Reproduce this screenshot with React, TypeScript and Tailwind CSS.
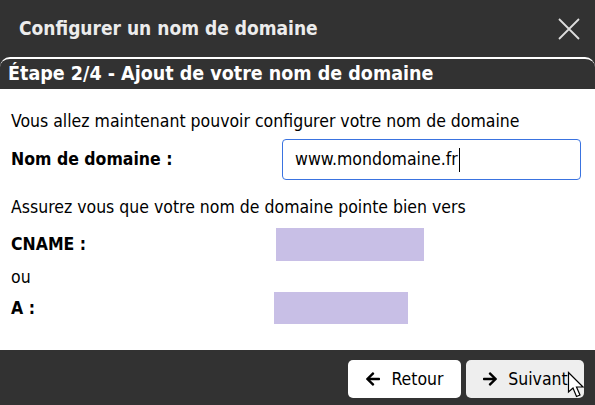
import { FaArrowLeft, FaArrowRight } from "react-icons/fa";

// Fenêtre modale : configuration d'un nom de domaine, étape 2

const font = { fontFamily: '"DejaVu Sans Condensed", "DejaVu Sans", sans-serif' };

function CloseIcon() {
  return (
    <svg width="22" height="22" viewBox="0 0 22 22" className="text-[#dedede]">
      <path d="M1 1 L21 21 M21 1 L1 21" stroke="currentColor" strokeWidth="1.8" />
    </svg>
  );
}

function Cursor() {
  return (
    <svg
      width="20"
      height="28"
      viewBox="0 0 20 28"
      className="absolute right-[8px] bottom-[6px]"
    >
      <path
        d="M1.5 1.5 L1.5 21 L6 17 L9.5 25.5 L13 24 L9.5 16 L16 16 Z"
        fill="#ffffff"
        stroke="#000000"
        strokeWidth="1.2"
        strokeLinejoin="miter"
      />
    </svg>
  );
}

export default function App() {
  return (
    <div
      className="w-[595px] h-[405px] flex flex-col bg-[#323232] overflow-hidden"
      style={font}
    >
      {/* Header */}
      <div className="h-[57px] flex items-center justify-between pl-[19px] pr-[15px] shrink-0">
        <h1 className="text-[19px] font-bold text-[#ececec]">
          Configurer un nom de domaine
        </h1>
        <CloseIcon />
      </div>

      {/* Step bar */}
      <div className="h-[32px] shrink-0 border-t-2 border-white rounded-t-[10px] flex items-center px-[8px]">
        <h2 className="text-[19.5px] font-bold text-white">
          Étape 2/4 - Ajout de votre nom de domaine
        </h2>
      </div>

      {/* Body */}
      <div className="flex-1 bg-white px-[11px] pt-[21px] text-[17.5px] text-black">
        <p className="leading-[22px]">
          Vous allez maintenant pouvoir configurer votre nom de domaine
        </p>

        <div className="flex items-center mt-[7px]">
          <span className="w-[271px] font-bold">Nom de domaine :</span>
          <div className="w-[299px] h-[41px] border border-[#3a73e0] rounded-[4px] flex items-center px-[12px]">
            <span>www.mondomaine.fr</span>
            <span className="w-px h-[24px] bg-black ml-px" />
          </div>
        </div>

        <p className="leading-[22px] mt-[16px]">
          Assurez vous que votre nom de domaine pointe bien vers
        </p>

        <div className="flex items-center mt-[10px]">
          <span className="w-[265px] font-bold">CNAME :</span>
          <div className="w-[148px] h-[33px] bg-[#c8bfe6]" />
        </div>

        <p className="leading-[20px] mt-[6px]">ou</p>

        <div className="flex items-center mt-[5px]">
          <span className="w-[263px] font-bold">A :</span>
          <div className="w-[134px] h-[32px] bg-[#c8bfe6]" />
        </div>
      </div>

      {/* Footer */}
      <div className="relative h-[55px] shrink-0 flex items-start justify-end gap-[5px] pt-[10px] pr-[11px] text-[17.5px]">
        <button className="w-[113px] h-[38px] bg-white rounded-[5px] flex items-center justify-center gap-[10px] text-black">
          <FaArrowLeft className="w-[16px] h-[16px]" />
          Retour
        </button>
        <button className="w-[118px] h-[38px] bg-[#eeeeee] rounded-[5px] flex items-center justify-center gap-[10px] text-black">
          <FaArrowRight className="w-[16px] h-[16px]" />
          Suivant
        </button>
        <Cursor />
      </div>
    </div>
  );
}
